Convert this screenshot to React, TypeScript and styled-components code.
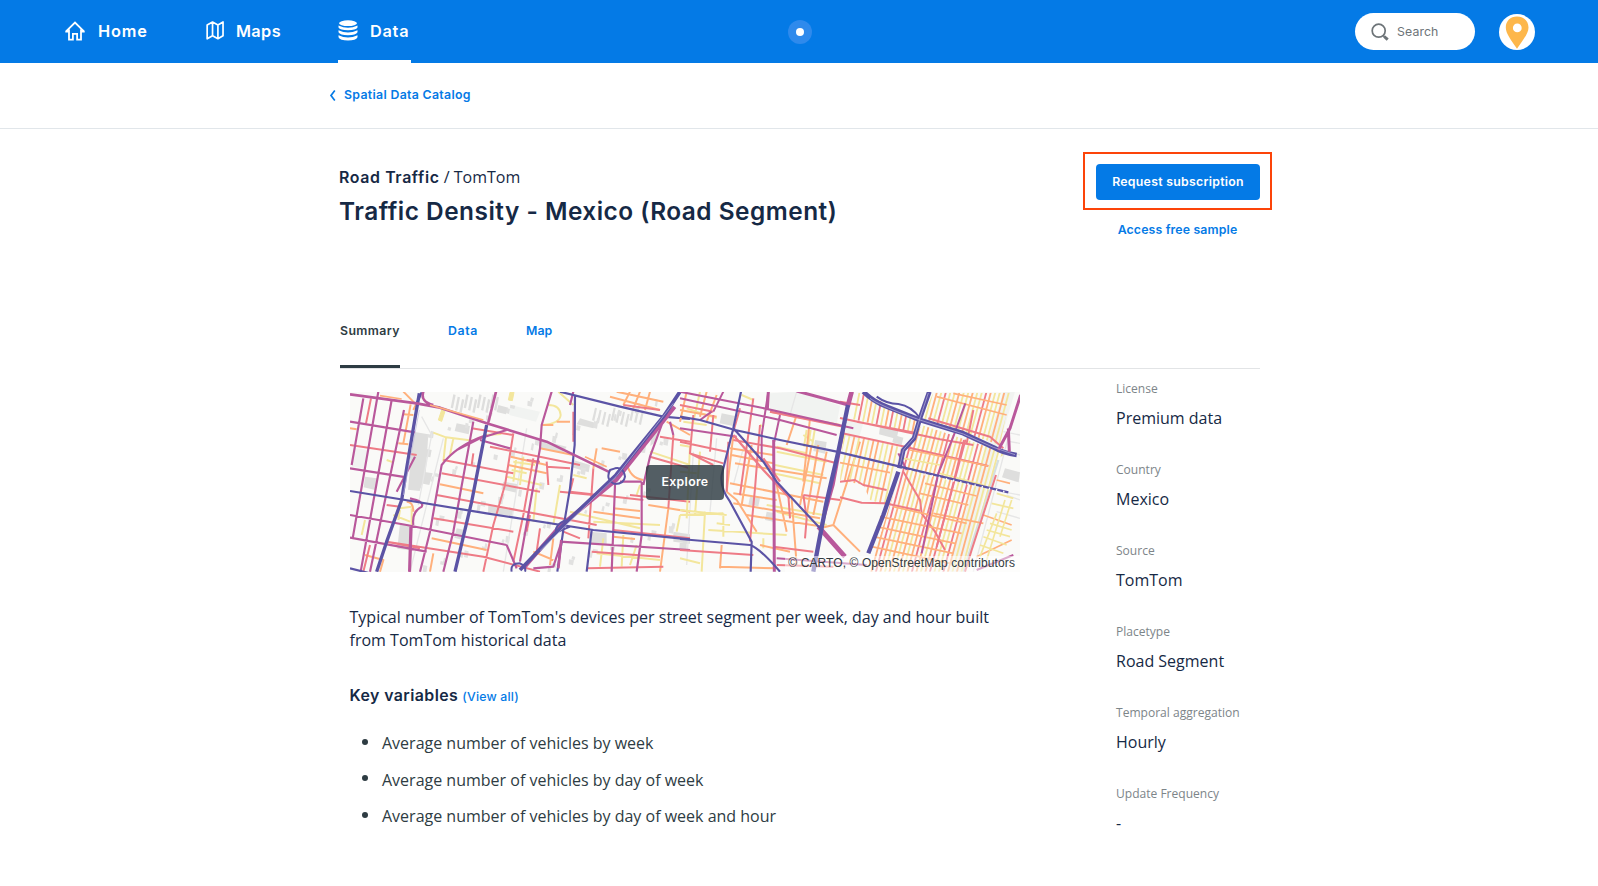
import React from "react";
import styled, { createGlobalStyle } from "styled-components";

const heading = `Inter, "Open Sans", sans-serif`;
const copy = `"Open Sans", "Noto Sans", sans-serif`;
const blue = "#047ae6";
const navy = "#162945";
const slate = "#2e3c43";

const GlobalStyle = createGlobalStyle`
  * { box-sizing: border-box; }
  body { margin: 0; background: #fff; color: ${navy}; font-family: ${copy}; }
  h1, p, ul, dl, dd { margin: 0; padding: 0; }
  a { text-decoration: none; }
`;

const Page = styled.div`
  width: 1598px;
  height: 886px;
  overflow: hidden;
  background: #fff;
`;

const Header = styled.header`
  display: grid;
  grid-template-columns: 1fr 24px 1fr;
  align-items: center;
  height: 63px;
  padding: 0 63px 0 65px;
  background: ${blue};
`;

const Nav = styled.nav`
  display: flex;
  gap: 57px;
  height: 63px;
`;

const NavItem = styled.a<{ $active?: boolean; $width: number; $gap: number }>`
  display: flex;
  align-items: center;
  gap: ${(p) => p.$gap}px;
  width: ${(p) => p.$width}px;
  height: 63px;
  padding-bottom: 2px;
  color: #fff;
  font: 600 16.3px/20px ${heading};
  white-space: nowrap;
  box-shadow: ${(p) => (p.$active ? "inset 0 -3px 0 #fff" : "none")};
`;

const NavLabel = styled.span<{ $spacing: number }>`
  letter-spacing: ${(p) => p.$spacing}px;
`;

const Beacon = styled.div`
  display: grid;
  place-items: center;
  width: 24px;
  height: 24px;
  border-radius: 50%;
  background: #2f8aec;
  &::after {
    content: "";
    width: 8px;
    height: 8px;
    border-radius: 50%;
    background: #fff;
  }
`;

const Tools = styled.div`
  display: flex;
  justify-content: flex-end;
  align-items: center;
  gap: 24px;
`;

const SearchBox = styled.div`
  display: flex;
  align-items: center;
  gap: 8.5px;
  width: 120.5px;
  height: 37px;
  padding-left: 16px;
  border-radius: 19px;
  background: #fff;
  color: #6d7478;
  font: 400 12.3px/16px ${heading};
  letter-spacing: 0.1px;
`;

const Avatar = styled.div`
  display: grid;
  place-items: center;
  width: 36px;
  height: 36px;
  border-radius: 50%;
  overflow: hidden;
  background: #fff;
`;

const Crumbs = styled.div`
  display: flex;
  align-items: center;
  gap: 8px;
  height: 66px;
  padding: 0 0 2px 329px;
  border-bottom: 1px solid #e1e6ea;
`;

const TextLink = styled.a<{ $spacing?: number; $weight?: number }>`
  color: ${blue};
  font: ${(p) => p.$weight ?? 600} 12.3px/16px ${heading};
  letter-spacing: ${(p) => p.$spacing ?? 0}px;
  white-space: nowrap;
`;

const Main = styled.main`
  width: 932px;
  margin-left: 340px;
`;

const Intro = styled.section`
  display: flex;
  justify-content: space-between;
  height: 176px;
`;

const Titles = styled.div`
  padding-top: 36px;
  margin-left: -1px;
`;

const Category = styled.p`
  font: 400 16px/24px ${copy};
  b { font: 600 15.9px/24px ${heading}; letter-spacing: 0.62px; }
`;

const Title = styled.h1`
  margin-top: 4px;
  font: 570 24.4px/34px ${heading};
  letter-spacing: 0.5px;
  white-space: nowrap;
`;

const Actions = styled.div`
  display: flex;
  flex-direction: column;
  align-items: center;
  width: 189px;
  padding-top: 23px;
`;

const Highlight = styled.div`
  width: 189px;
  height: 58px;
  margin-bottom: 12px;
  padding: 10px 11px;
  border: 2px solid #fc4409;
`;

const PrimaryButton = styled.button`
  display: block;
  width: 164px;
  height: 36px;
  padding: 0;
  border: 0;
  border-radius: 4px;
  background: ${blue};
  color: #fff;
  font: 600 12.3px/16px ${heading};
  letter-spacing: 0.28px;
  white-space: nowrap;
`;

const Tabs = styled.nav`
  display: flex;
  gap: 48px;
  width: 920px;
  height: 64px;
  border-bottom: 1px solid #e2e4e6;
`;

const Tab = styled.a<{ $active?: boolean; $width: number; $spacing: number }>`
  width: ${(p) => p.$width}px;
  height: 63px;
  padding-top: 18px;
  color: ${(p) => (p.$active ? slate : blue)};
  font: 600 12.3px/16px ${heading};
  letter-spacing: ${(p) => p.$spacing}px;
  border-bottom: ${(p) => (p.$active ? `3px solid ${slate}` : "0")};
`;

const Columns = styled.div`
  display: flex;
  justify-content: space-between;
  width: 920px;
`;

const Article = styled.article`
  width: 670px;
  margin-left: 10px;
  padding-top: 23px;
`;

const MapPreview = styled.figure`
  display: grid;
  place-items: center;
  width: 670px;
  height: 180px;
  margin: 0;
  background: #fafaf8;
  overflow: hidden;
  > * { grid-area: 1 / 1; }
`;

const ExploreButton = styled.button`
  z-index: 1;
  width: 78px;
  height: 35px;
  padding: 0 0 1px;
  border: 0;
  border-radius: 4px;
  background: rgba(46, 60, 67, 0.82);
  color: #fff;
  font: 600 12.3px/16px ${heading};
  letter-spacing: 0.32px;
`;

const Attribution = styled.figcaption`
  z-index: 1;
  place-self: end;
  padding: 0 5px 1px 3px;
  background: rgba(255, 255, 255, 0.5);
  color: #333b3f;
  font: 12px/15px "Liberation Sans", sans-serif;
  letter-spacing: 0.09px;
  white-space: nowrap;
`;

const Description = styled.p`
  margin-top: 33.5px;
  margin-left: -0.5px;
  font-size: 16.02px;
  line-height: 23.6px;
  white-space: nowrap;
`;

const KeyHeading = styled.div`
  display: flex;
  align-items: baseline;
  gap: 4px;
  margin-top: 31px;
  margin-left: -0.5px;
  font: 600 15.9px/24px ${heading};
  letter-spacing: 0.42px;
`;

const VariableList = styled.ul`
  margin-top: 17px;
  list-style: none;
`;

const Variable = styled.li`
  display: flex;
  align-items: center;
  gap: 14px;
  height: 36.7px;
  padding-left: 12px;
  color: ${slate};
  font-size: 16px;
  line-height: 24px;
  &::before {
    content: "";
    width: 6px;
    height: 6px;
    margin-top: -3px;
    border-radius: 50%;
    background: ${slate};
  }
`;

const Facts = styled.dl`
  width: 144px;
  padding-top: 12px;
`;

const Fact = styled.div`
  height: 81px;
  white-space: nowrap;
  dt { color: #7d8589; font-size: 12.05px; line-height: 16px; }
  dd { margin-top: 9px; font-size: 16px; line-height: 24px; }
`;

const C = { n: "#5b53a5", m: "#b9589b", s: "#ee7b86", o: "#ffb07c", y: "#f3e69c" };
type Tone = keyof typeof C;
type Road = [Tone, number, string];

const west: Road[] = [
  ["y", 6, "M280 143L318 157L400 167L440 150L484 147M318 157L310 230M340 160L330 210M520 230L585 240M515 255L560 265M500 275L605 300M528 225L520 290M550 215L540 300M660 300L640 420M590 310L580 410M75 405L65 450M160 390L210 410M180 375L175 405M215 370L215 420M180 370L215 365M655 20L700 60M140 225L160 232M700 270L740 280M850 450L845 545M900 300L890 330M790 460L780 545M760 410L960 420M770 505L960 525M930 200L1050 240M890 480L870 540M690 380L900 430M1020 390L1010 440M625 60Q660 60 662 90Q660 115 610 120"],
  ["o", 6, "M190 20L228 58L220 75M212 58L190 175M190 88L220 90M175 175L205 178M300 298L430 325M275 460L440 495M600 190L700 210M512 215L620 240M505 240L620 265M770 190L760 250M785 190L840 200M820 455L885 462M760 380L900 400M820 370L900 378M985 370L960 560M860 235Q870 280 910 285M650 110L690 110M605 120L640 120M870 20L850 60M900 20L880 70M930 20L915 75M830 20L970 50M810 35L960 75M640 460L630 540M580 500L640 525M75 510L130 525L120 560M280 505L270 560M30 130L50 133M200 350Q220 350 220 380M980 110L1050 150M925 360L1050 380"],
  ["s", 6, "M93 40L78 115M30 180L230 210M310 225L520 265M305 265L600 320M290 330L770 420M280 400L520 440M140 470L430 515L600 560M450 185L720 240M520 145L495 300L460 420L430 560M580 220L550 390L520 530M620 230L625 300M760 250L745 460M700 280L690 320L910 345M660 320L760 330M820 435L1050 460M755 500L960 515M90 480L70 560M140 470L240 490M140 360L180 365M700 80L700 170M400 205L395 240M395 130L520 150M560 225L600 230M620 245L690 250M740 550L970 545M850 60L960 75M1000 150L985 370M670 440L720 460M570 390L560 440M600 430L590 500M960 155L1050 170M930 215L1050 250M870 330L1050 350"],
  ["m", 6.5, "M30 110L225 142M30 250L200 277M30 390L200 420L500 480M30 458L260 500M70 40L35 240M115 20L38 460M155 45L62 560M192 75L90 560M225 215L170 320M440 150Q350 180 305 240L270 440L240 560M500 135L420 160L350 195M400 110L340 440L310 560M635 20L605 120L600 190L540 530M500 480L530 550M660 470L1050 495M825 300L815 560M905 290L905 450L890 560M965 120L930 215L910 300M700 20L690 60M220 420Q215 380 245 365Q255 350 210 340M215 420L210 560M580 550L640 545L665 470M840 290L905 290M990 110L1000 150M420 165L510 190"],
  ["n", 6.5, "M30 318L440 385L760 435L1050 463M660 20L840 65L970 95L1050 102M755 435L740 560M705 30L704 180L690 310L675 400L652 560M230 55L245 22M30 550L90 565"],
  ["n", 10, "M238 25L220 130L200 250L185 345L140 470L110 560M440 120L395 350L345 560"],
  ["m", 8, "M30 28L230 55L300 68L440 115L620 170L810 262M468 20L443 120M250 20Q240 50 280 60M212 425L208 560M664 465L655 550"],
  ["o", 5, "M120 32L185 42M270 60L430 105M735 215L800 245"],
  ["m", 12, "M1004 65L829 285L660 423L550 550"],
  ["n", 11, "M1020 20L970 95L828 270L670 420L540 555"],
  ["n", 6, "M810 255Q795 285 825 297Q852 297 855 275Q850 245 825 250ZM650 445Q640 420 680 405M690 425L655 440M515 560Q510 535 540 535Q560 545 555 560"],
];

const east: Road[] = [
  ["y", 6, "M0 180L30 185L20 400M60 200L45 390M0 260L50 265M0 390L130 385M130 385L130 455M85 435L320 450M110 415L150 420M75 380L65 560M0 375L140 390M250 460L250 490M290 185L380 205M370 150L400 170M370 180L410 185M380 135L372 185M392 135L384 185M404 135L396 185M240 120L250 125M185 30L220 45M290 200L440 230M285 240L430 270M280 265L420 295M260 360L430 390M290 380L440 420M20 70L110 100M10 110L80 120M60 20L40 110M0 520L60 535"],
  ["o", 6, "M0 75L110 95M110 30L80 110M80 20L60 95M20 20L0 110M150 190L280 210M155 210L280 235M165 235L440 280M150 295L430 350M160 325L290 345M160 355L420 400M200 390L430 425M240 480L330 500M120 545L290 550M125 480L120 550M160 150L140 320M140 320L170 345L230 440M335 340L350 540M290 300L320 440M390 100L370 290M350 90L320 180M395 180L360 360M415 180L380 390M440 200L400 390M455 290L430 380M460 420L540 500M540 170L460 420L420 430M270 80L480 120M215 180L185 360"],
  ["s", 6, "M0 60L100 80M40 90L30 205L130 235M30 205L100 240M0 170L140 200M160 165L300 190L470 235M180 70L160 140M220 40L180 330M240 120L225 310L210 470M370 330L480 345M370 330L380 400L375 460M0 495L220 510M280 485L400 500M290 540L460 545M325 330L330 400M270 80L490 125M145 170L140 320M100 90L90 200"],
  ["m", 6, "M0 40L300 105L470 150M0 20L230 65L520 130M0 130L170 155M130 20L100 80M95 80L60 105M265 20L245 150L245 230M300 90L283 170M890 555L1000 510M290 520L560 540"],
  ["s", 7, "M160 150L250 255L330 340M250 220L300 290"],
];

const eastMain: Road[] = [
  ["m", 9, "M281 165L283 560M350 18L505 60M1022 30L990 130L955 195M985 130L988 200M265 20L262 75"],
  ["m", 14, "M515 20L503 65M415 425L495 515"],
  ["m", 8, "M495 110L460 300L423 430"],
  ["n", 6.5, "M0 95L60 105L165 135L300 165L470 200L660 245L985 322M183 20L160 130L125 270Q120 310 150 350L215 470L212 560M0 462L210 480Q240 490 300 560M160 130L250 230L290 290L420 430"],
  ["n", 13, "M504 60L475 200L440 350L415 480L400 560M655 260L610 390L565 505"],
];

// The districts around the motorway junction, each a clipped family of parallel streets.
const highway: Road[] = [
  ["s", 6, "M0 84L170 120L300 148L400 165M0 128L185 168L445 228M50 95L225 128M265 85L450 140L490 175M0 35L60 45M0 275L45 270L70 285L140 300M0 322L65 338L135 340L240 362M190 245L240 330L245 370L285 425L315 480"],
  ["o", 5, "M290 20L500 75M340 10L500 45M210 180L445 228M0 218L150 248M255 280L410 318M240 310L385 345M280 370L430 400M160 350L380 400M120 380L365 430M110 410L345 460M100 440L340 490M95 470L330 520M430 375L515 405M410 500L515 450M470 270L510 280"],
  ["y", 5, "M300 250L430 285M190 205L300 225M470 310L520 325M455 340L520 355M450 400L515 420M440 420L510 440M430 440L500 465M420 465L490 490M470 370L420 500M495 330L440 510M515 330L480 440"],
  ["m", 6, "M376 40L340 140L295 250L245 490M175 190L200 240"],
  ["s", 6, "M468 255L395 480L375 545M400 60L380 160M372 150L335 300L290 470"],
  ["n", 14, "M70 5Q100 35 140 50L240 90L370 130L460 172Q490 190 530 195"],
  ["n", 6, "M110 20Q140 42 175 42Q215 48 240 85"],
  ["n", 14, "M268 5L240 85L222 145L190 180L178 235"],
];

type District = { id: string; area: string; tones: string; from: number; step: number; lean: number };
const districts: District[] = [
  { id: "south", area: "M245 105L500 190L475 205L370 545L85 545L180 250L200 180Z", tones: "ooyoyosoyoyoyosoyosyysoyoyyyooyyyyyo", from: 120, step: 13.5, lean: 0.27 },
  { id: "north", area: "M280 8L512 8L480 165L245 85Z", tones: "yoysyyoyyoyysoyyoyyoyyy", from: 225, step: 13.5, lean: 0.27 },
  { id: "junction", area: "M30 8L75 8L235 95L222 130L25 85Z", tones: "ysyoysyosyosyoys", from: 20, step: 14, lean: 0.2 },
  { id: "middle", area: "M10 132L185 172L140 345L90 330L70 285L0 270Z", tones: "yyoyoyooyyoyoyo", from: 0, step: 15, lean: 0.22 },
];

const buildings =
  "M220 140l45 8l-8 120l-18 50l-35 -4zM75 275l36 5l-5 35l-35-8zM180 415l38 6l-8 75l-38-5zM445 360l75 15l-6 25l-70-12zM750 440l50 5v35l-50-4zM720 100l50 15l-10 15l-50-12zM600 165l80 20l-12 20l-70-15zM350 115l40 8l-4 25l-42-10zM250 190l25 5l-4 22l-25-5zM250 260l28 5l-10 35l-25-5zM1000 440l50 8v28l-50-6zM490 290l45 8l-6 25l-45-10zM935 140l28-20l-12 48l-20 15zM700 225l50 15l-4 22l-50-15zM350 430l25 5l-7 30l-25-7zM475 60l30 8l-7 20l-28-7zM1145 85l40 8l-6 30l-40-8zM1425 165l35 6l-5 35l-35-8zM1620 125l55 12l-5 25l-53-14zM1662 150l28 8l-5 22l-28-8zM1995 250l45 12l-4 30l-50-15zM1020 460l20 2v35l-22-3zM1280 380l25 5l-5 25l-25-5zM1230 335l30 5l-5 24l-30-5z";

const lines = (count: number, draw: (i: number) => string) => Array.from({ length: count }, (_, i) => draw(i)).join("");

const huts = lines(90, (i) => {
  const x = 240 + ((i * 137) % 760);
  const y = 30 + ((i * 83) % 520);
  return `M${x} ${y}l${6 + (i % 4) * 3} 3l-3 ${10 + (i % 3) * 5}l-${7 + (i % 4) * 2} -3z`;
});
const sheds = lines(11, (i) => `M${340 + i * 13} ${28 + (i % 3) * 7}l7 2l-8 40l-7 -2zM${765 + i * 14} ${68 + (i % 4) * 6}l6 2l-8 38l-7 -2z`);

function Roads({ roads }: { roads: Road[] }) {
  return (
    <>
      {roads.map(([tone, width, d], i) => (
        <path key={i} d={d} stroke={C[tone]} strokeWidth={width} />
      ))}
    </>
  );
}

function Streets({ id, area, tones, from, step, lean }: District) {
  return (
    <>
      <clipPath id={id}><path d={area} /></clipPath>
      <g clipPath={`url(#${id})`}>
        {tones.split("").map((tone, i) => {
          const x = from + i * step;
          return <path key={i} d={`M${x + 200 * lean} 0L${x - 350 * lean} 550`} stroke={C[tone as Tone]} strokeWidth="5.5" />;
        })}
      </g>
    </>
  );
}

function TrafficMap() {
  return (
    <svg width="670" height="180" viewBox="30 21 2010 540" preserveAspectRatio="none" fill="none" strokeLinejoin="round">
      <rect x="30" y="21" width="2010" height="540" fill="#fafaf8" />
      <path d="M1290 25L1370 20L1500 62L1490 118L1290 75ZM1510 105L1570 115L1555 165L1500 150ZM45 190l40 5l-8 57l-42-8zM510 60l90 20l-12 30l-80-20zM1990 20h35l-160 540h-45z" fill="#f1f3f1" />
      <path d={buildings + sheds} fill="#dededd" />
      <path d={huts} fill="#e1e1e0" />
      <path d="M245 95L275 150L235 360M560 130L490 560M1060 200L1040 540M1370 20L1350 90M1130 160L1110 380M2030 60L1900 560M2010 170L2040 175M1985 320L2040 330M1970 380L2040 400M1990 140L2040 150M1210 190L1180 300M310 160L210 560M2000 330L2040 345M2010 200L2040 210" stroke="#e6e6e6" strokeWidth="4" />
      <path d="M1975 225L1870 560" stroke="#d3dfe2" strokeWidth="7" />
      <path d="M305 75l10 4l-10 30l-10-4zM510 22h12l-5 25l-12-2z" fill="#f3e69c" stroke="#f3e69c" strokeWidth="3" />
      <Roads roads={west} />
      <g transform="translate(1020 0)">
        <Roads roads={east} />
      </g>
      <g transform="translate(1500 15)">
        {districts.map((d) => <Streets key={d.id} {...d} />)}
        <Roads roads={highway} />
      </g>
      <g transform="translate(1020 0)">
        <Roads roads={eastMain} />
      </g>
      <path d="M1590 40Q1620 63 1740 105L1870 147L1960 187L2025 209M1765 24L1738 105L1722 158L1690 195L1680 240M1000 55L828 275L600 497M238 75L190 330" stroke="#b9b5dc" strokeWidth="2" />
      <path d="M1710 258L1995 321" stroke="#fafaf8" strokeWidth="6" strokeDasharray="4 18" />
    </svg>
  );
}

const HomeIcon = () => (
  <svg width="20" height="20" viewBox="0 0 20 20" fill="none" stroke="#fff" strokeWidth="1.8">
    <path d="M.8 10.7L10 1.5l9.2 9.2M4 8.5v10.1h3.9v-5.7h4.2v5.7H16V8.5M.3 10.6h4M15.7 10.6h4" />
  </svg>
);
const MapsIcon = () => (
  <svg width="20" height="21" viewBox="0 0 20 21" fill="none" stroke="#fff" strokeWidth="1.9" strokeLinejoin="round">
    <path d="M1.3 4.3L7.3 1l6 3.3L19 1v15.3l-5.7 3.4-6-3.4-6 3.4ZM7.3 1v15.3M13.3 4.3v15.4" />
  </svg>
);
const DataIcon = () => (
  <svg width="20" height="21" viewBox="0 0 20 21" fill="#fff">
    <ellipse cx="10" cy="3.2" rx="9" ry="2.9" />
    <path d="M.5 5.4Q10 10 19.5 5.4V7.5Q18 10.2 10 10.2T.5 7.5ZM.5 10.2Q10 14.9 19.5 10.2V12.3Q18 15.2 10 15.2T.5 12.3ZM.5 15.2Q10 19.9 19.5 15.2V17.3Q18 20.6 10 20.6T.5 17.3Z" />
  </svg>
);
const SearchIcon = () => (
  <svg width="18" height="18" viewBox="0 0 18 18" fill="none" stroke="#6d7478">
    <circle cx="7.7" cy="7.7" r="6.5" strokeWidth="1.7" />
    <path d="M12.2 12.5l1.4 1.4" strokeWidth="1.6" />
    <path d="M13.2 13.5l3.5 3.2" strokeWidth="3" />
  </svg>
);
const PinIcon = () => (
  <svg width="36" height="36" viewBox="0 0 36 36">
    <path fillRule="evenodd" fill="#fdb74b" d="M18 2.5C11.3 2.5 6.8 7.1 6.8 13.4C6.8 19.5 12 25.8 18 34.7C24 25.8 29.5 19.5 29.5 13.4C29.5 7.1 24.8 2.5 18 2.5ZM18.3 9.5a4.4 4.4 0 1 1 0 8.8a4.4 4.4 0 0 1 0-8.8Z" />
  </svg>
);

const facts = [
  ["License", "Premium data"],
  ["Country", "Mexico"],
  ["Source", "TomTom"],
  ["Placetype", "Road Segment"],
  ["Temporal aggregation", "Hourly"],
  ["Update Frequency", "-"],
];

const variables = [
  "Average number of vehicles by week",
  "Average number of vehicles by day of week",
  "Average number of vehicles by day of week and hour",
];

export default function App() {
  return (
    <Page>
      <GlobalStyle />
      <Header>
        <Nav>
          <NavItem $width={84} $gap={13}><HomeIcon /><NavLabel $spacing={0.85}>Home</NavLabel></NavItem>
          <NavItem $width={75} $gap={12}><MapsIcon /><NavLabel $spacing={0.4}>Maps</NavLabel></NavItem>
          <NavItem $width={73} $gap={12} $active><DataIcon /><NavLabel $spacing={0.75}>Data</NavLabel></NavItem>
        </Nav>
        <Beacon />
        <Tools>
          <SearchBox><SearchIcon />Search</SearchBox>
          <Avatar><PinIcon /></Avatar>
        </Tools>
      </Header>
      <Crumbs>
        <svg width="7" height="12" viewBox="0 0 7 12" fill="none" stroke={blue} strokeWidth="1.7"><path d="M5.8 1.4L2 6.5l3.8 5" /></svg>
        <TextLink $spacing={0.33}>Spatial Data Catalog</TextLink>
      </Crumbs>
      <Main>
        <Intro>
          <Titles>
            <Category><b>Road Traffic</b> / TomTom</Category>
            <Title>Traffic Density - Mexico (Road Segment)</Title>
          </Titles>
          <Actions>
            <Highlight><PrimaryButton>Request subscription</PrimaryButton></Highlight>
            <TextLink $spacing={0.15}>Access free sample</TextLink>
          </Actions>
        </Intro>
        <Tabs>
          <Tab $active $width={60} $spacing={0.42}>Summary</Tab>
          <Tab $width={30} $spacing={0.6}>Data</Tab>
          <Tab $width={27} $spacing={0.1}>Map</Tab>
        </Tabs>
        <Columns>
          <Article>
            <MapPreview>
              <TrafficMap />
              <ExploreButton>Explore</ExploreButton>
              <Attribution>© CARTO, © OpenStreetMap contributors</Attribution>
            </MapPreview>
            <Description>
              Typical number of TomTom's devices per street segment per week, day and hour built<br />
              from TomTom historical data
            </Description>
            <KeyHeading>Key variables <TextLink $weight={500} $spacing={0.2}>(View all)</TextLink></KeyHeading>
            <VariableList>
              {variables.map((v) => <Variable key={v}>{v}</Variable>)}
            </VariableList>
          </Article>
          <Facts>
            {facts.map(([k, v]) => <Fact key={k}><dt>{k}</dt><dd>{v}</dd></Fact>)}
          </Facts>
        </Columns>
      </Main>
    </Page>
  );
}
